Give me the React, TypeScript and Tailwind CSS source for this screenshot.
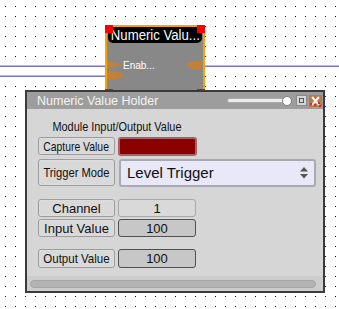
import React from "react";

function Grid() {
  return (
    <svg className="absolute left-0 top-0" width="339" height="309">
      <defs>
        <pattern id="dots" x="0" y="0" width="10" height="10" patternUnits="userSpaceOnUse">
          <rect x="5" y="6" width="1" height="1" fill="#111" />
        </pattern>
      </defs>
      <rect width="339" height="309" fill="url(#dots)" />
      <rect x="0" y="65.5" width="339" height="1.5" fill="#7676c4" />
      <rect x="0" y="75.5" width="110" height="1.5" fill="#7676c4" />
    </svg>
  );
}

function Node() {
  return (
    <div className="absolute left-[105px] top-[25px] w-[100px] h-[72px] border-2 border-[#f7a400] bg-[#888888]">
      <div className="ml-[1px] w-[94px] h-[16px] bg-black rounded-b-[5px] flex items-center justify-center overflow-hidden">
        <span className="inline-block text-[14px] leading-[16px] text-white whitespace-nowrap scale-x-[0.94]">Numeric Valu...</span>
      </div>
      <svg className="absolute left-[-2px] top-[-2px]" width="100" height="72">
        <polygon points="2,35.5 9,37.5 18,39.5 9,41.5 2,43.5" fill="#c47f38" />
        <polygon points="2,45.5 11,46.5 18.5,48.5 18.5,52 11,54 2,54.5" fill="#c47f38" />
        <polygon points="82,38.5 89,36 97,35.5 97,44.5 89,44 82,42" fill="#c47f38" />
      </svg>
      <span className="absolute left-[16px] top-[33px] text-[10px] leading-[12px] text-white">Enab...</span>
      <div className="absolute left-[-2px] top-[-2px] w-[8px] h-[8px] bg-[#ff0000]" />
      <div className="absolute right-[-2px] top-[-2px] w-[8px] h-[8px] bg-[#ff0000]" />
      <div className="absolute left-[-2px] bottom-[-2px] w-[8px] h-[8px] bg-[#ff0000]" />
      <div className="absolute right-[-2px] bottom-[-2px] w-[8px] h-[8px] bg-[#ff0000]" />
    </div>
  );
}

function Label({ text, scale, h }: { text: string; scale: string; h: string }) {
  return (
    <div className={`w-[77px] ${h} flex items-center justify-center rounded-[3px] border border-[#9c9c9c] bg-[#d9d9d9] shadow-[inset_0_0_1px_#fff] overflow-hidden`}>
      <span className={`inline-block whitespace-nowrap text-[13px] leading-[15px] text-[#111] ${scale}`}>{text}</span>
    </div>
  );
}

function TitleBar() {
  return (
    <div className="h-[17px] bg-[#9d9d9d] flex items-center pl-[10px] pr-[1px]">
      <span className="inline-block text-[12.5px] leading-[16px] text-[#f4f4f4] whitespace-nowrap">Numeric Value Holder</span>
      <div className="flex-1" />
      <div className="relative w-[65px] h-[12px] flex items-center mr-[4px]">
        <div className="w-[60px] h-[5px] rounded-full bg-[#ececec] border border-[#a9a9a9]" />
        <div className="absolute right-[0px] top-[1px] w-[10px] h-[10px] rounded-full bg-white border border-[#7d7d7d]" />
      </div>
      <div className="w-[11px] h-[11px] bg-[#d6d6d6] border border-[#8a8a8a] flex items-center justify-center mr-[2px]">
        <div className="w-[5px] h-[5px] border border-[#555]" />
      </div>
      <svg width="13" height="12" viewBox="0 0 13 12">
        <rect x="0" y="0" width="13" height="12" fill="#b77b4a" />
        <path d="M3 2 L10 10 M10 2 L3 10" stroke="#f2f2f2" strokeWidth="2" />
        <rect x="1" y="8" width="2" height="2" fill="#ff1a1a" />
        <rect x="5" y="9" width="2" height="2" fill="#ff1a1a" />
        <rect x="9" y="7" width="2" height="2" fill="#ff1a1a" />
        <rect x="10" y="10" width="2" height="2" fill="#ff1a1a" />
      </svg>
    </div>
  );
}

function Window() {
  return (
    <div className="absolute left-[25px] top-[90px] w-[300px] h-[203px] border-2 border-[#3b3b3b] bg-[#d6d6d6] flex flex-col">
      <TitleBar />
      <div className="flex flex-col pl-[11px] flex-1">
        <div className="w-[158px] mt-[11px] h-[14px] flex justify-center">
          <span className="inline-block whitespace-nowrap text-[12px] leading-[14px] text-[#111] scale-x-[0.91]">Module Input/Output Value</span>
        </div>
        <div className="flex mt-[3px] gap-[3px]">
          <Label text="Capture Value" scale="scale-x-[0.8]" h="h-[18px]" />
          <div className="w-[79px] h-[19px] rounded-[3px] border-2 border-[#a86262] bg-[#8b0000]" />
        </div>
        <div className="flex mt-[3px] gap-[4px]">
          <Label text="Trigger Mode" scale="scale-x-[0.86]" h="h-[27px]" />
          <div className="w-[197px] h-[28px] rounded-[3px] border-2 border-[#a9a9b3] bg-[#e8e8f8] flex items-center pl-[6px] pr-[6px]">
            <span className="text-[15px] leading-[18px] text-[#111] flex-1">Level Trigger</span>
            <svg width="8" height="12" viewBox="0 0 8 12">
              <polygon points="4,0 8,4.5 0,4.5" fill="#555" />
              <polygon points="0,7 8,7 4,11.5" fill="#555" />
            </svg>
          </div>
        </div>
        <div className="flex mt-[12px] gap-[3px]">
          <Label text="Channel" scale="" h="h-[18px]" />
          <div className="w-[78px] h-[18px] rounded-[3px] border border-[#a8a8a8] bg-[#d9d9d9] flex items-center justify-center text-[13px] leading-[15px] text-[#111]">1</div>
        </div>
        <div className="flex mt-[2px] gap-[3px]">
          <Label text="Input Value" scale="" h="h-[18px]" />
          <div className="w-[78px] h-[18px] rounded-[3px] border-[1.5px] border-[#505050] bg-[#c7c7c7] flex items-center justify-center text-[13px] leading-[15px] text-[#111]">100</div>
        </div>
        <div className="flex mt-[12px] gap-[3px]">
          <Label text="Output Value" scale="scale-x-[0.885]" h="h-[19px]" />
          <div className="w-[78px] h-[19px] rounded-[3px] border-[1.5px] border-[#505050] bg-[#c7c7c7] flex items-center justify-center text-[13px] leading-[15px] text-[#111]">100</div>
        </div>
      </div>
      <div className="h-[15px] bg-[#cdcdcd] flex items-center pl-[3px] pr-[7px]">
        <div className="w-full h-[8px] rounded-full bg-[#b3b3b3] border border-[#a6a6a6]" />
      </div>
    </div>
  );
}

export default function App() {
  return (
    <div className="relative w-[339px] h-[309px] bg-white overflow-hidden font-['Liberation_Sans',Arial,sans-serif]">
      <Grid />
      <Node />
      <Window />
    </div>
  );
}
